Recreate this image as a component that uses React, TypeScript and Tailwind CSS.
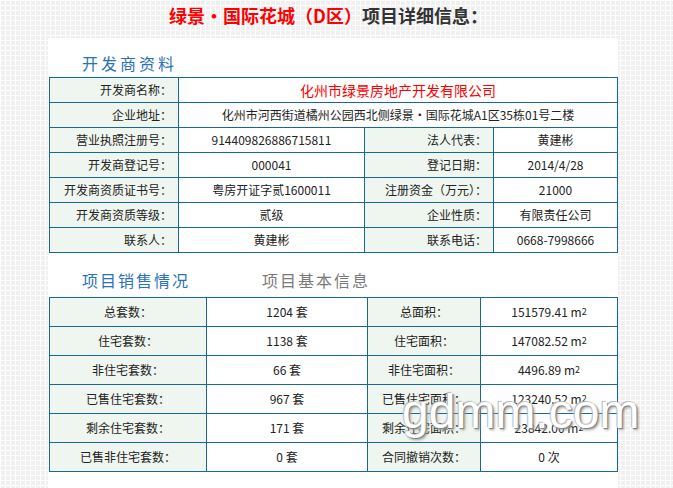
import React from "react";

const font = {
  fontFamily: '"Noto Sans CJK SC", "Noto Sans", sans-serif',
};

type Cell = { text: React.ReactNode; label?: boolean; span?: boolean; red?: boolean };

const devRows: Cell[][] = [
  [
    { text: "开发商名称：", label: true },
    { text: "化州市绿景房地产开发有限公司", span: true, red: true },
  ],
  [
    { text: "企业地址：", label: true },
    { text: "化州市河西街道橘州公园西北侧绿景·国际花城A1区35栋01号二楼", span: true },
  ],
  [
    { text: "营业执照注册号：", label: true },
    { text: "914409826886715811" },
    { text: "法人代表：", label: true },
    { text: "黄建彬" },
  ],
  [
    { text: "开发商登记号：", label: true },
    { text: "000041" },
    { text: "登记日期：", label: true },
    { text: "2014/4/28" },
  ],
  [
    { text: "开发商资质证书号：", label: true },
    { text: "粤房开证字贰1600011" },
    { text: "注册资金（万元）：", label: true },
    { text: "21000" },
  ],
  [
    { text: "开发商资质等级：", label: true },
    { text: "贰级" },
    { text: "企业性质：", label: true },
    { text: "有限责任公司" },
  ],
  [
    { text: "联系人：", label: true },
    { text: "黄建彬" },
    { text: "联系电话：", label: true },
    { text: "0668-7998666" },
  ],
];

function M2({ v }: { v: string }) {
  return (
    <span>
      {v} m<sup className="text-[9px] relative -top-[2px]">2</sup>
    </span>
  );
}

const saleRows: [string, React.ReactNode, string, React.ReactNode][] = [
  ["总套数：", "1204 套", "总面积：", <M2 v="151579.41" />],
  ["住宅套数：", "1138 套", "住宅面积：", <M2 v="147082.52" />],
  ["非住宅套数：", "66 套", "非住宅面积：", <M2 v="4496.89" />],
  ["已售住宅套数：", "967 套", "已售住宅面积：", <M2 v="123240.52" />],
  ["剩余住宅套数：", "171 套", "剩余住宅面积：", <M2 v="23842.00" />],
  ["已售非住宅套数：", "0 套", "合同撤销次数：", "0 次"],
];

export default function App() {
  return (
    <div
      style={font}
      className="relative min-h-screen w-[673px] flex flex-col bg-[#f0f0f0] bg-[linear-gradient(90deg,#ffffff_1px,transparent_1px),linear-gradient(#ffffff_1px,transparent_1px)] bg-[size:5px_5px] overflow-hidden"
    >
      {/* TITLE */}
      <div className="h-[38px] pt-[3px] pr-[16px] text-center text-[18px] leading-[24px] font-bold text-[#333]">
        <span className="text-[#ff0000]">绿景·国际花城（D区）</span>
        项目详细信息：
      </div>

      {/* PANEL */}
      <div className="flex-1 ml-[48px] w-[570px] bg-white pl-[1px]">
        <div className="h-[39px] pt-[13px] pl-[33px] text-[16px] leading-[24px] tracking-[3px] text-[#2a72b8]">
          开发商资料
        </div>

        <div className="grid grid-cols-[129px_186px_129px_124px] border-l border-t border-[#17679d] text-[12px] text-[#222]">
          {devRows.map((row, i) =>
            row.map((c, j) => (
              <div
                key={i + "-" + j}
                className={
                  "h-[25px] flex items-center border-r border-b border-[#17679d] " +
                  (c.label
                    ? "justify-end pr-[6px] bg-[#eff6ef]"
                    : "justify-center") +
                  (c.span ? " col-span-3" : "") +
                  (c.red ? " text-[14px] text-[#ff0000]" : "")
                }
              >
                {c.text}
              </div>
            ))
          )}
        </div>

        <div className="h-[44px] pt-[15px] pl-[33px] flex text-[16px] leading-[24px] tracking-[2px]">
          <span className="text-[#2a72b8] w-[180px]">项目销售情况</span>
          <span className="text-[#7a7a7a]">项目基本信息</span>
        </div>

        <div className="grid grid-cols-[157px_161px_113px_137px] border-l border-t border-[#17679d] text-[12px] text-[#222]">
          {saleRows.map((r, i) => (
            <React.Fragment key={i}>
              <div className="h-[29px] flex items-center justify-center bg-[#eff6ef] border-r border-b border-[#17679d]">
                {r[0]}
              </div>
              <div className="h-[29px] flex items-center justify-center border-r border-b border-[#17679d]">
                {r[1]}
              </div>
              <div className="h-[29px] flex items-center justify-center bg-[#eff6ef] border-r border-b border-[#17679d]">
                {r[2]}
              </div>
              <div className="h-[29px] flex items-center justify-center border-r border-b border-[#17679d]">
                {r[3]}
              </div>
            </React.Fragment>
          ))}
        </div>
      </div>

      {/* WATERMARK */}
      <span
        style={{ fontFamily: '"Liberation Sans", sans-serif' }}
        className="absolute left-[402px] top-[382px] text-[48px] leading-[60px] text-white [text-shadow:1px_1px_1px_#808080,-1px_-1px_1px_#b8b8b8,2px_2px_3px_#a0a0a0]"
      >
        gdmm.com
      </span>
    </div>
  );
}
